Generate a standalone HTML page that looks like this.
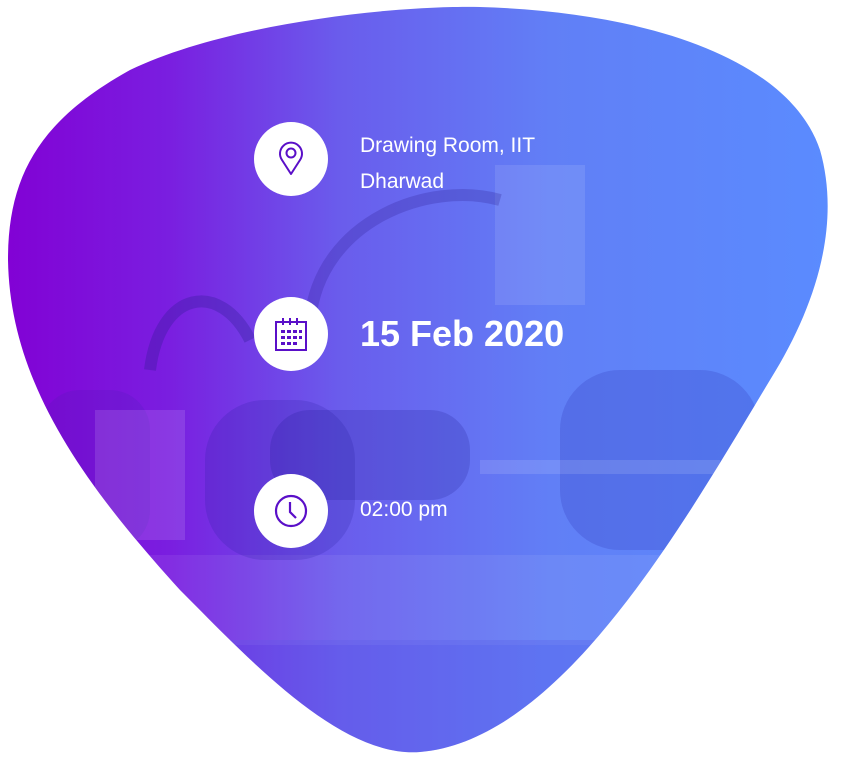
<!DOCTYPE html>
<html><head><meta charset="utf-8"><style>
html,body{margin:0;padding:0;background:#fff;width:846px;height:763px;overflow:hidden}
.wrap{position:relative;width:846px;height:763px;font-family:"Liberation Sans",Roboto,sans-serif}
svg.bg{position:absolute;left:0;top:0}
.c{position:absolute;left:254px;width:74px;height:74px;border-radius:50%;background:#fff;display:flex;align-items:center;justify-content:center}
.t{position:absolute;left:360px;color:#fff}
</style></head><body><div class="wrap">
<svg class="bg" width="846" height="763" viewBox="0 0 846 763">
<defs>
<linearGradient id="g" x1="0" y1="0" x2="1" y2="0">
<stop offset="0" stop-color="#8200d4"/>
<stop offset="0.2" stop-color="#7a1ee0"/>
<stop offset="0.4" stop-color="#6a5cec"/>
<stop offset="0.65" stop-color="#617ff6"/>
<stop offset="1" stop-color="#5a8cff"/>
</linearGradient>
<clipPath id="cp"><path d="M 8 260 C 8 175, 40 120, 130 70 C 230 22, 400 5, 480 7 C 650 12, 790 60, 820 150 C 840 220, 820 300, 770 380 C 680 530, 560 740, 420 752 C 340 758, 250 660, 180 590 C 80 480, 10 380, 8 260 Z"/></clipPath>
</defs>
<g clip-path="url(#cp)">
<rect width="846" height="763" fill="url(#g)"/>
<rect x="0" y="555" width="846" height="90" fill="#ffffff" opacity="0.07"/>
<rect x="0" y="640" width="846" height="130" fill="#5a5ce8" opacity="0.3"/>
<rect x="495" y="165" width="90" height="140" fill="#ffffff" opacity="0.1"/>
<rect x="560" y="370" width="200" height="180" rx="60" fill="#2a2ab0" opacity="0.2"/>
<rect x="205" y="400" width="150" height="160" rx="60" fill="#2a20a0" opacity="0.2"/>
<rect x="40" y="390" width="110" height="160" rx="40" fill="#3a20a8" opacity="0.15"/>
<rect x="270" y="410" width="200" height="90" rx="40" fill="#201890" opacity="0.2"/>
<path d="M150 370 C 160 290, 220 280, 250 340" stroke="#2a1c90" stroke-width="12" fill="none" opacity="0.3"/>
<path d="M310 320 C 320 220, 430 180, 500 200" stroke="#2a1c90" stroke-width="12" fill="none" opacity="0.25"/>
<rect x="95" y="410" width="90" height="130" fill="#ffffff" opacity="0.12"/>
<rect x="480" y="460" width="240" height="14" fill="#ffffff" opacity="0.12"/>
</g>
</svg>

<div class="c" style="top:122px"><svg width="30" height="36" viewBox="0 0 30 36" fill="none" stroke="#5a0fc8" stroke-width="2"><path d="M15 33 L6 19 A11 11 0 1 1 24 19 Z" stroke-linejoin="round"/><circle cx="15" cy="12" r="4.5"/></svg></div>
<div class="c" style="top:297px"><svg width="34" height="34" viewBox="0 0 34 34" fill="#5a0fc8"><path d="M2 5h30v28H2z" fill="none" stroke="#5a0fc8" stroke-width="2"/><rect x="8" y="1" width="2" height="7"/><rect x="15" y="1" width="2" height="7"/><rect x="22" y="1" width="2" height="7"/><g><rect x="7" y="13" width="4" height="3"/><rect x="13" y="13" width="4" height="3"/><rect x="19" y="13" width="4" height="3"/><rect x="25" y="13" width="3" height="3"/><rect x="7" y="19" width="4" height="3"/><rect x="13" y="19" width="4" height="3"/><rect x="19" y="19" width="4" height="3"/><rect x="25" y="19" width="3" height="3"/><rect x="7" y="25" width="4" height="3"/><rect x="13" y="25" width="4" height="3"/><rect x="19" y="25" width="4" height="3"/></g></svg></div>
<div class="c" style="top:474px"><svg width="34" height="34" viewBox="0 0 34 34" fill="none" stroke="#5a0fc8" stroke-width="2.2"><circle cx="17" cy="17" r="15"/><path d="M16 8v10l6 6"/></svg></div>

<div class="t" style="top:128px;font-size:21px;line-height:36px">Drawing Room, IIT<br>Dharwad</div>
<div class="t" style="top:313px;font-size:36px;font-weight:bold;line-height:42px">15 Feb 2020</div>
<div class="t" style="top:496px;font-size:21px;line-height:28px">02:00 pm</div>
</div></body></html>
